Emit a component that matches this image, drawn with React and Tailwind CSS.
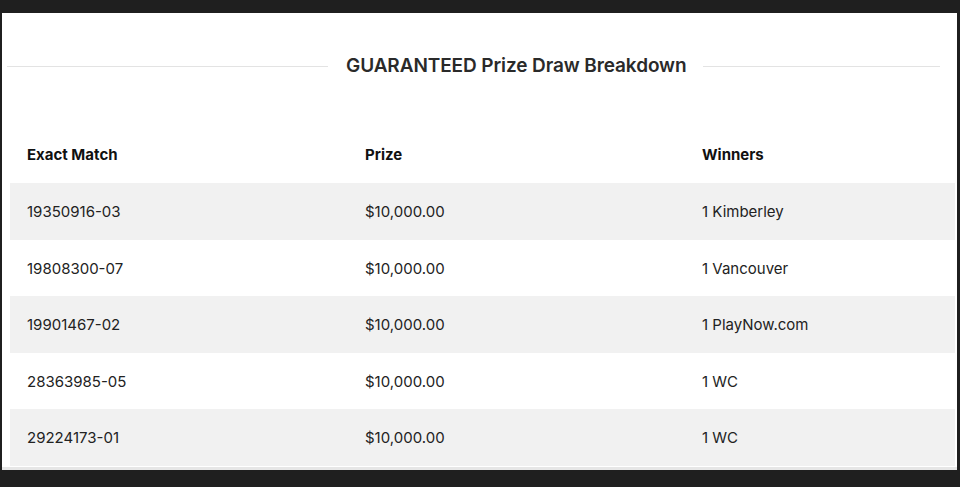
import React from "react";

const rows = [
  { match: "19350916-03", prize: "$10,000.00", winners: "1 Kimberley" },
  { match: "19808300-07", prize: "$10,000.00", winners: "1 Vancouver" },
  { match: "19901467-02", prize: "$10,000.00", winners: "1 PlayNow.com" },
  { match: "28363985-05", prize: "$10,000.00", winners: "1 WC" },
  { match: "29224173-01", prize: "$10,000.00", winners: "1 WC" },
];

function App() {
  return (
    <div className="w-[960px] h-[487px] bg-[#1f1f1f] pt-[13px] pl-[2px] font-['Inter',sans-serif] text-[#222]">
      <div className="w-[955px] h-[457px] bg-white border-b-[3px] border-[#e6e6e6]">
        {/* title */}
        <div className="flex items-center h-[53px] translate-y-[27px]">
          <div className="ml-[5px] w-[321px] h-px bg-[#e3e3e3]" />
          <h2 className="ml-[18px] text-[19px] font-semibold tracking-[-0.1px] text-[#2a2a2a]">
            GUARANTEED Prize Draw Breakdown
          </h2>
          <div className="ml-[17px] w-[237px] h-px bg-[#e3e3e3]" />
        </div>

        <div className="mt-[60px] ml-[8px] w-[945px] text-[15px]">
          <div className="grid grid-cols-[338px_337px_1fr] h-[57px] items-center pt-[2px] font-bold text-[#111]">
            <div className="pl-[17px]">Exact Match</div>
            <div className="pl-[17px]">Prize</div>
            <div className="pl-[17px]">Winners</div>
          </div>
          {rows.map((r, i) => (
            <div
              key={r.match}
              className={
                "grid grid-cols-[338px_337px_1fr] h-[56.5px] items-center pt-[2px] " +
                (i % 2 === 0 ? "bg-[#f1f1f1]" : "bg-white")
              }
            >
              <div className="pl-[17px]">{r.match}</div>
              <div className="pl-[17px]">{r.prize}</div>
              <div className="pl-[17px]">{r.winners}</div>
            </div>
          ))}
        </div>
      </div>
    </div>
  );
}

export default App;
